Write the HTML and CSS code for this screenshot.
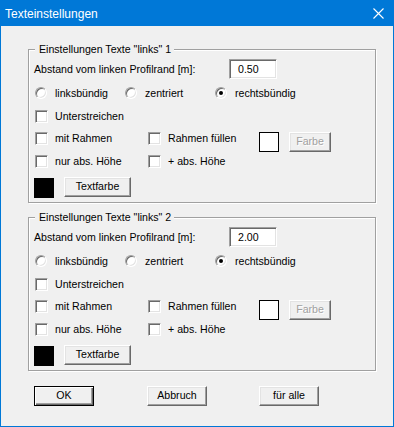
FILE: index.html
```html
<!DOCTYPE html>
<html lang="de">
<head>
<meta charset="utf-8">
<title>Texteinstellungen</title>
<link rel="stylesheet" href="styles.css">
</head>
<body>
<div class="window">
  <div class="titlebar">
    <span class="title">Texteinstellungen</span>
    <svg class="close" width="11" height="11" viewBox="0 0 11 11"><path d="M0.5 0.5 L10.5 10.5 M10.5 0.5 L0.5 10.5" stroke="#fff" stroke-width="1.1" fill="none"/></svg>
  </div>
  <div class="content">
    <div class="group">
      <span class="legend">Einstellungen Texte "links" 1</span>
      <div class="row row-dist">
        <span class="dist-label">Abstand vom linken Profilrand [m]:</span>
        <span class="input">0.50</span>
      </div>
      <div class="row row-radio">
        <span class="item w90"><span class="radio"></span>linksbündig</span>
        <span class="item w90"><span class="radio"></span>zentriert</span>
        <span class="item"><span class="radio on"></span>rechtsbündig</span>
      </div>
      <div class="row row-under">
        <span class="item"><span class="check"></span>Unterstreichen</span>
      </div>
      <div class="row row-frame">
        <span class="item w113"><span class="check"></span>mit Rahmen</span>
        <span class="item w111"><span class="check"></span>Rahmen füllen</span>
        <span class="swatch white"></span>
        <span class="btn disabled farbe">Farbe</span>
      </div>
      <div class="row row-abs">
        <span class="item w113"><span class="check"></span>nur abs. Höhe</span>
        <span class="item w111"><span class="check"></span>+ abs. Höhe</span>
      </div>
      <div class="row row-color">
        <span class="swatch black"></span>
        <span class="btn textfarbe">Textfarbe</span>
      </div>
    </div>
    <div class="group second">
      <span class="legend">Einstellungen Texte "links" 2</span>
      <div class="row row-dist">
        <span class="dist-label">Abstand vom linken Profilrand [m]:</span>
        <span class="input">2.00</span>
      </div>
      <div class="row row-radio">
        <span class="item w90"><span class="radio"></span>linksbündig</span>
        <span class="item w90"><span class="radio"></span>zentriert</span>
        <span class="item"><span class="radio on"></span>rechtsbündig</span>
      </div>
      <div class="row row-under">
        <span class="item"><span class="check"></span>Unterstreichen</span>
      </div>
      <div class="row row-frame">
        <span class="item w113"><span class="check"></span>mit Rahmen</span>
        <span class="item w111"><span class="check"></span>Rahmen füllen</span>
        <span class="swatch white"></span>
        <span class="btn disabled farbe">Farbe</span>
      </div>
      <div class="row row-abs">
        <span class="item w113"><span class="check"></span>nur abs. Höhe</span>
        <span class="item w111"><span class="check"></span>+ abs. Höhe</span>
      </div>
      <div class="row row-color">
        <span class="swatch black"></span>
        <span class="btn textfarbe">Textfarbe</span>
      </div>
    </div>
    <div class="buttons">
      <span class="btn default">OK</span>
      <span class="btn abbruch">Abbruch</span>
      <span class="btn alle">für alle</span>
    </div>
  </div>
</div>
</body>
</html>
```

FILE: styles.css
```css
* { box-sizing: border-box; }
html, body { margin: 0; padding: 0; }
body {
  width: 394px;
  height: 427px;
  overflow: hidden;
  font-family: "Liberation Sans", Arial, sans-serif;
  font-size: 10.6px;
  color: #000;
  background: #f0f0f0;
}
.window {
  width: 394px;
  height: 427px;
  display: flex;
  flex-direction: column;
}
.titlebar {
  height: 26px;
  background: #0078d7;
  color: #fff;
  display: flex;
  align-items: center;
  justify-content: space-between;
  padding: 0 10px 0 5px;
  flex: none;
}
.title {
  font-size: 12px;
  line-height: 14px;
  margin-top: 1px;
}
.close { display: block; margin-top: 0; }
.content {
  flex: 1;
  border: 1px solid #0078d7;
  border-top: 0;
  padding: 23px 0 0 27px;
}
.group {
  position: relative;
  width: 348px;
  border: 1px solid #a0a0a0;
  box-shadow: inset 1px 1px 0 #fff, 1px 1px 0 #fff;
  padding: 9px 0 4px 6px;
}
.group.second { margin-top: 14px; }
.legend {
  position: absolute;
  top: -7px;
  left: 6px;
  padding: 0 3px 0 4px;
  background: #f0f0f0;
  line-height: 13px;
  white-space: nowrap;
}
.row {
  display: flex;
  align-items: center;
  height: 22px;
  line-height: 13px;
  white-space: nowrap;
}
.row-dist { height: 20px; }
.row-radio { margin-top: 3px; }
.row-under { margin-top: 1px; }
.row-abs { margin-top: 1px; }
.row-frame { align-items: flex-start; }
.row-frame .item { height: 22px; }
.row-color { height: 21px; margin-top: 5px; align-items: flex-start; }
.dist-label { width: 195px; margin-left: -1px; }
.input {
  width: 48px;
  height: 20px;
  background: #fff;
  border: 1px solid;
  border-color: #a0a0a0 #fff #fff #a0a0a0;
  box-shadow: inset 1px 1px 0 #696969, inset -1px -1px 0 #e3e3e3;
  padding-left: 8px;
  display: flex;
  align-items: center;
}
.item { display: flex; align-items: center; }
.w90 { width: 90px; }
.w113 { width: 113px; }
.w111 { width: 111px; }
.radio {
  position: relative;
  width: 12px;
  height: 12px;
  border-radius: 50%;
  background: #fff;
  border: 1px solid;
  border-color: #a0a0a0 #fff #fff #a0a0a0;
  box-shadow: inset 1px 1px 0 #696969, inset -1px -1px 0 #e3e3e3;
  margin-right: 8px;
  flex: none;
}
.radio.on::after {
  content: "";
  position: absolute;
  left: 3px;
  top: 3px;
  width: 4px;
  height: 4px;
  border-radius: 50%;
  background: #000;
}
.check {
  width: 13px;
  height: 13px;
  background: #fff;
  border: 1px solid;
  border-color: #a0a0a0 #fff #fff #a0a0a0;
  box-shadow: inset 1px 1px 0 #696969, inset -1px -1px 0 #e3e3e3;
  margin-right: 7px;
  flex: none;
}
.swatch {
  width: 20px;
  height: 20px;
  flex: none;
}
.swatch.white {
  background: #fff;
  border: 1px solid #000;
  margin-top: 5px;
  margin-right: 10px;
}
.swatch.black {
  background: #000;
  margin-left: -1px;
  margin-top: 1px;
  margin-right: 10px;
}
.btn {
  display: flex;
  align-items: center;
  justify-content: center;
  height: 20px;
  border: 1px solid;
  border-color: #fff #696969 #696969 #fff;
  box-shadow: inset -1px -1px 0 #a0a0a0, inset 1px 1px 0 #e3e3e3;
  background: #f0f0f0;
  line-height: 13px;
  padding-bottom: 1px;
  flex: none;
}
.btn.farbe { width: 42px; margin-top: 5px; }
.btn.disabled { color: #a0a0a0; text-shadow: 1px 1px 0 #fff; }
.btn.textfarbe { width: 67px; }
.buttons {
  display: flex;
  margin-top: 15px;
  padding-left: 6px;
}
.btn.default {
  width: 60px;
  border-color: #000;
  box-shadow: inset 1px 1px 0 #fff, inset -1px -1px 0 #696969, inset -2px -2px 0 #a0a0a0;
}
.btn.abbruch { width: 60px; margin-left: 53px; }
.btn.alle { width: 60px; margin-left: 52px; }
```
